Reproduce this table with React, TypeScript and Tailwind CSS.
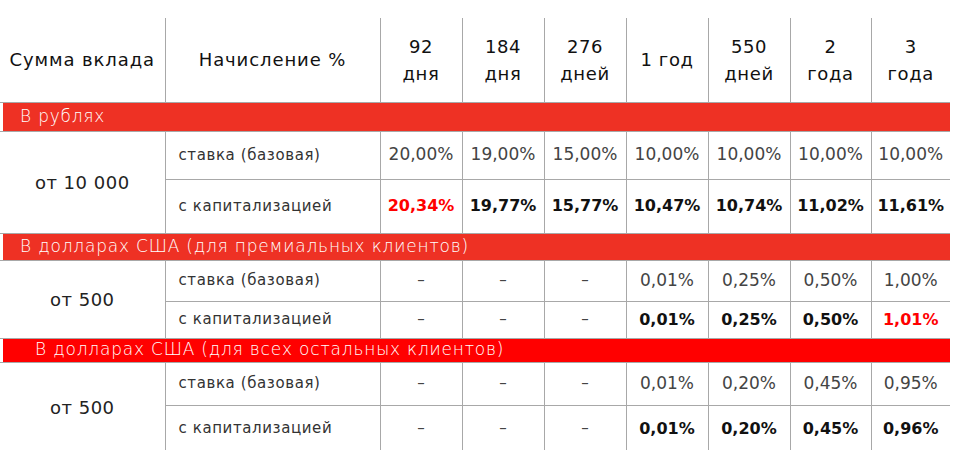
const heads = [
  ["92", "дня"],
  ["184", "дня"],
  ["276", "дней"],
  ["1 год"],
  ["550", "дней"],
  ["2", "года"],
  ["3", "года"],
];

type Cell = { v: string; red?: boolean };

type Group = {
  title: string;
  band: string;
  bandH: string;
  bandPad: string;
  amount: string;
  rows: { label: string; h: string; bold: boolean; cells: Cell[] }[];
};

const c = (list: string[], redAt = -1): Cell[] => list.map((v, i) => ({ v, red: i === redAt }));

const groups: Group[] = [
  {
    title: "В рублях",
    band: "bg-[#ee3124]",
    bandH: "h-[28px]",
    bandPad: "pl-[17px]",
    amount: "от 10 000",
    rows: [
      {
        label: "ставка (базовая)",
        h: "h-[48px]",
        bold: false,
        cells: c(["20,00%", "19,00%", "15,00%", "10,00%", "10,00%", "10,00%", "10,00%"]),
      },
      {
        label: "с капитализацией",
        h: "h-[54px]",
        bold: true,
        cells: c(["20,34%", "19,77%", "15,77%", "10,47%", "10,74%", "11,02%", "11,61%"], 0),
      },
    ],
  },
  {
    title: "В долларах США (для премиальных клиентов)",
    band: "bg-[#ee3124]",
    bandH: "h-[26px]",
    bandPad: "pl-[17px]",
    amount: "от 500",
    rows: [
      {
        label: "ставка (базовая)",
        h: "h-[41px]",
        bold: false,
        cells: c(["–", "–", "–", "0,01%", "0,25%", "0,50%", "1,00%"]),
      },
      {
        label: "с капитализацией",
        h: "h-[37px]",
        bold: true,
        cells: c(["–", "–", "–", "0,01%", "0,25%", "0,50%", "1,01%"], 6),
      },
    ],
  },
  {
    title: "В долларах США (для всех остальных клиентов)",
    band: "bg-[#ff0000]",
    bandH: "h-[23px]",
    bandPad: "pl-[32px]",
    amount: "от 500",
    rows: [
      {
        label: "ставка (базовая)",
        h: "h-[43px]",
        bold: false,
        cells: c(["–", "–", "–", "0,01%", "0,20%", "0,45%", "0,95%"]),
      },
      {
        label: "с капитализацией",
        h: "h-[47px]",
        bold: true,
        cells: c(["–", "–", "–", "0,01%", "0,20%", "0,45%", "0,96%"]),
      },
    ],
  },
];

const line = "border-[#a8a8a8]";

export default function App() {
  return (
    <div className="w-[957px] h-[450px] bg-white pt-[18px] overflow-hidden font-['DejaVu_Sans',sans-serif]">
      <table className="table-fixed border-collapse w-[950px]">
        <colgroup>
          <col className="w-[165px]" />
          <col className="w-[215px]" />
          <col className="w-[82px]" />
          <col className="w-[82px]" />
          <col className="w-[82px]" />
          <col className="w-[82px]" />
          <col className="w-[82px]" />
          <col className="w-[81px]" />
          <col className="w-[79px]" />
        </colgroup>
        <thead>
          <tr className="h-[84px]">
            <th className="p-0 font-normal text-[18px] tracking-[0.9px] text-[#111] text-center whitespace-nowrap">
              Сумма вклада
            </th>
            <th className={`p-0 font-normal text-[18px] tracking-[0.9px] text-[#111] text-center border-l ${line}`}>
              Начисление %
            </th>
            {heads.map((h, i) => (
              <th
                key={i}
                className={`p-0 font-normal text-[18px] tracking-[0.6px] leading-[27px] text-[#111] text-center border-l ${line}`}
              >
                {h.map((t, j) => (
                  <div key={j}>{t}</div>
                ))}
              </th>
            ))}
          </tr>
        </thead>
        <tbody>
          {groups.map((g) => (
            <>
              <tr key={g.title + "band"} className={g.bandH}>
                <td colSpan={9} className={`p-0 pl-[3px] border-y ${line}`}>
                  <div
                    className={`${g.band} ${g.bandH} ${g.bandPad} flex items-center text-white text-[17px] tracking-[0.8px] font-extralight whitespace-nowrap`}
                  >
                    {g.title}
                  </div>
                </td>
              </tr>
              {g.rows.map((r, ri) => (
                <tr key={g.title + ri} className={r.h}>
                  {ri === 0 && (
                    <td
                      rowSpan={2}
                      className={`p-0 text-center text-[18px] tracking-[0.5px] text-[#222] border-b ${line}`}
                    >
                      {g.amount}
                    </td>
                  )}
                  <td
                    className={`p-0 pl-[13px] text-[15px] tracking-[0.6px] text-[#333] border-l border-b ${line}`}
                  >
                    {r.label}
                  </td>
                  {r.cells.map((cell, ci) => (
                    <td
                      key={ci}
                      className={`p-0 text-center whitespace-nowrap border-l border-b ${line} ${
                        cell.v === "–"
                          ? "text-[15px] text-[#444]"
                          : r.bold
                            ? "text-[16px] font-bold " + (cell.red ? "text-[#ff0000]" : "text-[#111]")
                            : "text-[17px] text-[#444]"
                      }`}
                    >
                      {cell.v}
                    </td>
                  ))}
                </tr>
              ))}
            </>
          ))}
        </tbody>
      </table>
    </div>
  );
}
